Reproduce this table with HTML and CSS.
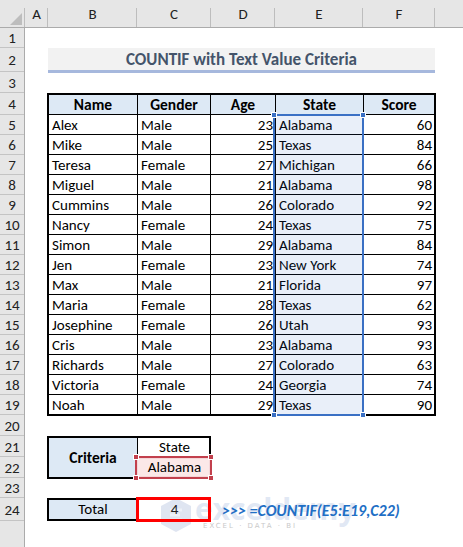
FILE: index.html
```html
<!DOCTYPE html>
<html>
<head>
<meta charset="utf-8">
<link rel="stylesheet" href="styles.css">
</head>
<body>
<div class="sheet">
  <div class="colhdr">
    <div class="corner"><svg width="25" height="27" viewBox="0 0 25 27"><polygon points="22,13 22,25 10,25" fill="#bdbdbd"/></svg></div>
    <div class="ch w-a">A</div>
    <div class="ch w-b">B</div>
    <div class="ch w-c">C</div>
    <div class="ch w-d">D</div>
    <div class="ch w-e">E</div>
    <div class="ch w-f">F</div>
    <div class="ch w-g"></div>
  </div>
  <div class="main">
    <div class="rowhdr">
      <div class="rh h20">1</div>
      <div class="rh h24">2</div>
      <div class="rh h21">3</div>
      <div class="rh h22">4</div>
      <div class="rh h20">5</div>
      <div class="rh h20">6</div>
      <div class="rh h20">7</div>
      <div class="rh h20">8</div>
      <div class="rh h20">9</div>
      <div class="rh h20">10</div>
      <div class="rh h20">11</div>
      <div class="rh h20">12</div>
      <div class="rh h20">13</div>
      <div class="rh h20">14</div>
      <div class="rh h20">15</div>
      <div class="rh h20">16</div>
      <div class="rh h20">17</div>
      <div class="rh h20">18</div>
      <div class="rh h20">19</div>
      <div class="rh h21">20</div>
      <div class="rh h21">21</div>
      <div class="rh h21">22</div>
      <div class="rh h20">23</div>
      <div class="rh h23">24</div>
    </div>
    <div class="content">
      <div class="title">COUNTIF with Text Value Criteria</div>

      <div class="tblwrap">
        <div class="tbl">
          <div class="c h">Name</div><div class="c h">Gender</div><div class="c h">Age</div><div class="c h">State</div><div class="c h">Score</div>
          <div class="c">Alex</div><div class="c">Male</div><div class="c r">23</div><div class="c">Alabama</div><div class="c r">60</div>
          <div class="c">Mike</div><div class="c">Male</div><div class="c r">25</div><div class="c">Texas</div><div class="c r">84</div>
          <div class="c">Teresa</div><div class="c">Female</div><div class="c r">27</div><div class="c">Michigan</div><div class="c r">66</div>
          <div class="c">Miguel</div><div class="c">Male</div><div class="c r">21</div><div class="c">Alabama</div><div class="c r">98</div>
          <div class="c">Cummins</div><div class="c">Male</div><div class="c r">26</div><div class="c">Colorado</div><div class="c r">92</div>
          <div class="c">Nancy</div><div class="c">Female</div><div class="c r">24</div><div class="c">Texas</div><div class="c r">75</div>
          <div class="c">Simon</div><div class="c">Male</div><div class="c r">29</div><div class="c">Alabama</div><div class="c r">84</div>
          <div class="c">Jen</div><div class="c">Female</div><div class="c r">23</div><div class="c">New York</div><div class="c r">74</div>
          <div class="c">Max</div><div class="c">Male</div><div class="c r">21</div><div class="c">Florida</div><div class="c r">97</div>
          <div class="c">Maria</div><div class="c">Female</div><div class="c r">28</div><div class="c">Texas</div><div class="c r">62</div>
          <div class="c">Josephine</div><div class="c">Female</div><div class="c r">26</div><div class="c">Utah</div><div class="c r">93</div>
          <div class="c">Cris</div><div class="c">Male</div><div class="c r">23</div><div class="c">Alabama</div><div class="c r">93</div>
          <div class="c">Richards</div><div class="c">Male</div><div class="c r">27</div><div class="c">Colorado</div><div class="c r">63</div>
          <div class="c">Victoria</div><div class="c">Female</div><div class="c r">24</div><div class="c">Georgia</div><div class="c r">74</div>
          <div class="c last">Noah</div><div class="c last">Male</div><div class="c r last">29</div><div class="c last">Texas</div><div class="c r last">90</div>
        </div>
        <div class="sel-blue">
          <span class="hd tl"></span><span class="hd tr"></span><span class="hd bl"></span><span class="hd br"></span>
        </div>
      </div>

      <div class="critwrap">
        <div class="crit">
          <div class="crit-label">Criteria</div>
          <div class="crit-head">State</div>
          <div class="crit-val">Alabama</div>
        </div>
        <div class="sel-red">
          <span class="hd tl"></span><span class="hd tr"></span><span class="hd bl"></span><span class="hd br"></span>
        </div>
      </div>

      <div class="totrow">
        <div class="watermark">
          <svg class="wm-logo" width="34" height="36" viewBox="0 0 34 36"><path d="M17 1 L32 9 L32 27 L17 35 L2 27 L2 9 Z" fill="#dfe5f1"/><path d="M11 13 L23 13 M11 18 L21 18 M11 23 L23 23" stroke="#eef1f8" stroke-width="3"/></svg>
          <span class="wm-text">exceldemy</span>
          <span class="wm-sub">EXCEL · DATA · BI</span>
        </div>
        <div class="tot">
          <div class="tot-label">Total</div>
          <div class="tot-val">4</div>
        </div>
        <div class="formula">&gt;&gt;&gt; =COUNTIF(E5:E19,C22)</div>
        <div class="redbox"></div>
      </div>
    </div>
  </div>
</div>
</body>
</html>
```

FILE: styles.css
```css
* { box-sizing: border-box; }

body {
  margin: 0;
  width: 463px;
  height: 547px;
  overflow: hidden;
  background: #ffffff;
  font-family: Carlito, Calibri, Lato, "Liberation Sans", sans-serif;
  font-size: 15px;
  color: #000;
}

.colhdr {
  display: flex;
  height: 28px;
  background: #e6e6e6;
  border-bottom: 1px solid #ababab;
}

.corner { width: 25px; height: 27px; }

.ch {
  position: relative;
  display: flex;
  align-items: center;
  justify-content: center;
  color: #222;
  font-size: 15px;
  padding-top: 1px;
}
.ch::after {
  content: "";
  position: absolute;
  right: 0;
  top: 8px;
  bottom: 0;
  width: 1px;
  background: #bdbdbd;
}
.corner + .ch::before {
  content: "";
  position: absolute;
  left: -1px;
  top: 8px;
  bottom: 0;
  width: 1px;
  background: #bdbdbd;
}
.w-a { width: 23px; }
.w-b { width: 89px; }
.w-c { width: 74px; }
.w-d { width: 64px; }
.w-e { width: 88px; }
.w-f { width: 72px; }
.w-g { flex: 1; }
.w-g::after { display: none; }

.main { display: flex; }

.rowhdr {
  width: 25px;
  height: 519px;
  background: #e6e6e6;
  border-right: 1px solid #ababab;
  flex-shrink: 0;
}
.rh {
  display: flex;
  align-items: center;
  justify-content: center;
  border-bottom: 1px solid #c4c4c4;
  color: #222;
  font-size: 15px;
  padding-top: 1px;
}
.h20 { height: 20px; }
.h21 { height: 21px; }
.h22 { height: 22px; }
.h23 { height: 23px; }
.h24 { height: 24px; }

.content {
  padding-left: 23px;
  flex: 1;
}

.title {
  width: 387px;
  height: 25px;
  margin-top: 20px;
  background: #f2f2f2;
  border-bottom: 3px solid #a6b8dd;
  color: #44546a;
  font-weight: bold;
  font-size: 17px;
  display: flex;
  align-items: center;
  justify-content: center;
  padding-top: 1px;
}

.tblwrap {
  position: relative;
  margin-top: 20px;
  margin-left: -1px;
  width: 389px;
}

.tbl {
  display: grid;
  grid-template-columns: 89px 73px 65px 88px 70px;
  border: 2px solid #000;
  width: 389px;
}

.c {
  height: 20px;
  border-right: 1px solid #000;
  border-bottom: 1px solid #000;
  padding: 1px 3px 0 3px;
  line-height: 18px;
  white-space: nowrap;
  overflow: hidden;
}
.c:nth-child(5n) { border-right: none; }
.c.last { border-bottom: none; height: 19px; }
.c.h {
  background: #dde9f5;
  font-weight: bold;
  font-size: 15.5px;
  text-align: center;
}
.c.r { text-align: right; padding-right: 2px; }

.sel-blue {
  position: absolute;
  left: 226px;
  top: 21px;
  width: 91px;
  height: 302px;
  border: 2px solid #3a70c4;
  background: rgba(40, 100, 200, 0.1);
}
.sel-blue .hd { background: #3a70c4; }

.hd {
  position: absolute;
  width: 6px;
  height: 6px;
  border: 1px solid #fff;
}
.hd.tl { left: -4px; top: -4px; }
.hd.tr { right: -4px; top: -4px; }
.hd.bl { left: -4px; bottom: -4px; }
.hd.br { right: -4px; bottom: -4px; }

.critwrap {
  position: relative;
  margin-top: 20px;
  margin-left: -1px;
  width: 164px;
}

.crit {
  display: grid;
  grid-template-columns: 89px 73px;
  grid-template-rows: 19px 20px;
  border: 2px solid #000;
  width: 164px;
}
.crit-label {
  grid-row: 1 / 3;
  background: #dde9f5;
  border-right: 1px solid #000;
  font-weight: bold;
  font-size: 15.5px;
  display: flex;
  align-items: center;
  justify-content: center;
}
.crit-head {
  border-bottom: 1px solid #000;
  text-align: center;
  line-height: 18px;
}
.crit-val {
  background: #fbe8e8;
  text-align: center;
  line-height: 20px;
}

.sel-red {
  position: absolute;
  left: 88px;
  top: 20px;
  width: 77px;
  height: 23px;
  border: 2px solid #c2404d;
  box-shadow: inset 0 0 0 1px #f4d6d8;
}
.sel-red .hd { background: #c2404d; }

.totrow {
  position: relative;
  display: flex;
  align-items: center;
  margin-top: 19px;
  margin-left: -1px;
}

.tot {
  position: relative;
  display: grid;
  grid-template-columns: 89px 73px;
  border: 2px solid #000;
  width: 164px;
  height: 23px;
}
.tot-label {
  background: #dde9f5;
  border-right: 1px solid #000;
  text-align: center;
  line-height: 19px;
}
.tot-val {
  text-align: center;
  line-height: 19px;
  color: #222;
}

.formula {
  position: relative;
  margin-left: 11px;
  color: #1f6fc5;
  font-weight: bold;
  font-style: italic;
  font-size: 16px;
  padding-top: 1px;
}

.redbox {
  position: absolute;
  left: 89px;
  top: -1px;
  width: 75px;
  height: 25px;
  border: 3px solid #ff0000;
}

.watermark {
  position: absolute;
  left: 112px;
  top: -1px;
  width: 200px;
  height: 40px;
}
.wm-logo { position: absolute; left: 0; top: 0; }
.wm-text {
  position: absolute;
  left: 36px;
  top: 0;
  height: 24px;
  line-height: 24px;
  font-family: "Open Sans", sans-serif;
  font-weight: bold;
  font-size: 30px;
  color: rgba(200, 212, 235, 0.55);
}
.wm-sub {
  position: absolute;
  left: 44px;
  top: 25px;
  line-height: 8px;
  font-family: "DejaVu Sans", sans-serif;
  font-size: 7px;
  letter-spacing: 2px;
  color: #c9c9c9;
  white-space: nowrap;
}
```
